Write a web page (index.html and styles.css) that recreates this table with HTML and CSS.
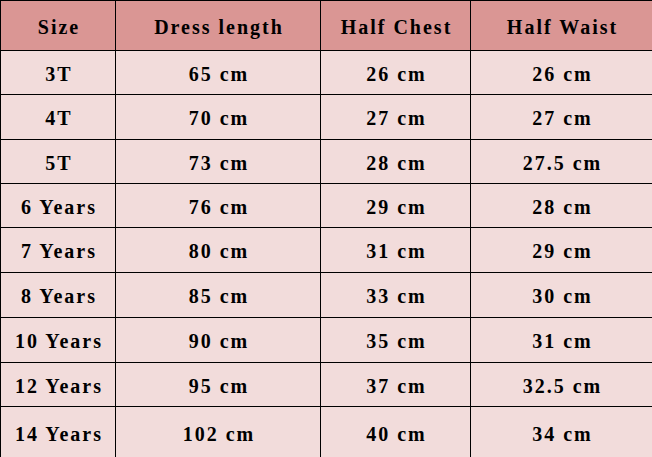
FILE: index.html
```html
<!DOCTYPE html>
<html>
<head>
<meta charset="utf-8">
<link rel="stylesheet" href="styles.css">
</head>
<body>
<table class="size-table">
  <colgroup>
    <col class="c1"><col class="c2"><col class="c3"><col class="c4">
  </colgroup>
  <thead>
    <tr class="head"><th>Size</th><th>Dress length</th><th>Half Chest</th><th>Half Waist</th></tr>
  </thead>
  <tbody>
    <tr class="r44"><td>3T</td><td>65 cm</td><td>26 cm</td><td>26 cm</td></tr>
    <tr class="r45"><td>4T</td><td>70 cm</td><td>27 cm</td><td>27 cm</td></tr>
    <tr class="r44"><td>5T</td><td>73 cm</td><td>28 cm</td><td>27.5 cm</td></tr>
    <tr class="r44"><td>6 Years</td><td>76 cm</td><td>29 cm</td><td>28 cm</td></tr>
    <tr class="r45"><td>7 Years</td><td>80 cm</td><td>31 cm</td><td>29 cm</td></tr>
    <tr class="r45"><td>8 Years</td><td>85 cm</td><td>33 cm</td><td>30 cm</td></tr>
    <tr class="r45"><td>10 Years</td><td>90 cm</td><td>35 cm</td><td>31 cm</td></tr>
    <tr class="r44"><td>12 Years</td><td>95 cm</td><td>37 cm</td><td>32.5 cm</td></tr>
    <tr class="last"><td>14 Years</td><td>102 cm</td><td>40 cm</td><td>34 cm</td></tr>
  </tbody>
</table>
</body>
</html>
```
FILE: styles.css
```css
html, body {
  margin: 0;
  padding: 0;
  background: #ffffff;
}
.size-table {
  border-collapse: collapse;
  table-layout: fixed;
  width: 652px;
  font-family: "Liberation Serif", "Times New Roman", serif;
  font-weight: bold;
  font-size: 20px;
  letter-spacing: 2px;
  color: #000;
}
.c1 { width: 115px; }
.c2 { width: 205px; }
.c3 { width: 150px; }
.c4 { width: 182px; }
.size-table th,
.size-table td {
  border: 1px solid #000;
  text-align: center;
  vertical-align: middle;
  padding: 2px 0 0 2px;
  white-space: pre;
  line-height: 20px;
  background: #f2dcdb;
}
.size-table th {
  background: #da9694;
  font-weight: bold;
  padding-top: 3px;
}
.head { height: 50px; }
.r44 { height: 44px; }
.r45 { height: 45px; }
.last { height: 52px; }
```
